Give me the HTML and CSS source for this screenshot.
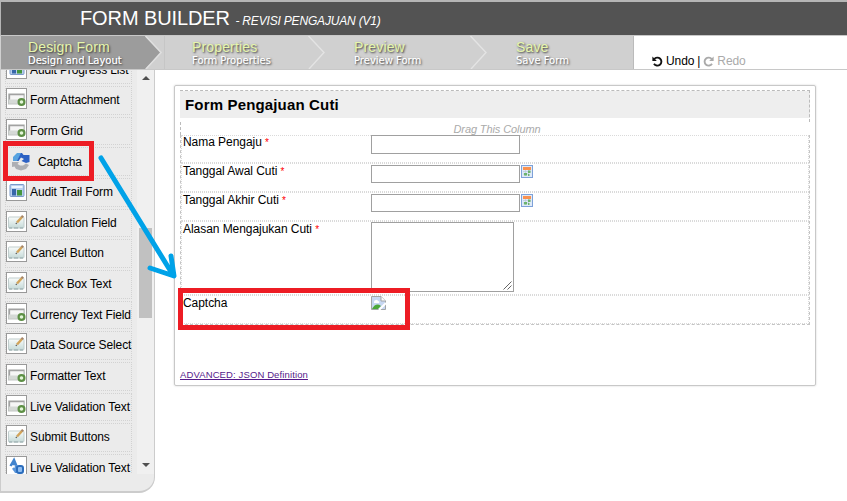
FILE: index.html
```html
<!DOCTYPE html>
<html lang="id">
<head>
<meta charset="utf-8">
<title>Form Builder</title>
<link rel="stylesheet" href="styles.css">
</head>
<body>
<svg class="defs" aria-hidden="true">
  <defs>
    <linearGradient id="soft" x1="0" y1="0" x2="0" y2="1"><stop offset="0" stop-color="#fafcfb"/><stop offset="1" stop-color="#c5dad8"/></linearGradient>
    <symbol id="field" viewBox="0 0 19 19">
      <rect x="1.5" y="5" width="16" height="10" fill="#d5d9d6" stroke="#c2c6c4"/>
      <rect x="3" y="6" width="13" height="4.500" fill="#f6f6f6"/><path d="M2.500 10.500V5.500H17" fill="none" stroke="#a2a2a2" stroke-width="1.300"/>
      <circle cx="14.500" cy="13" r="4" fill="#5d8f45"/><circle cx="14.500" cy="13" r="1.800" fill="#e4f5da"/>
    </symbol>
    <symbol id="pen" viewBox="0 0 19 19">
      <rect x="1.500" y="5" width="15.500" height="11" rx="1" fill="url(#soft)" stroke="#c0cdcd"/>
      <path d="M2 16h3M7 16h4M13 16h3" stroke="#92a7a8"/>
      <path d="M10 10.500L15 5" stroke="#d2a45a" stroke-width="2.500"/><path d="M14.800 5.200l1.200-1.400" stroke="#a58468" stroke-width="2.500"/>
      <path d="M8.800 11.800l1-1" stroke="#555" stroke-width="1.200"/>
    </symbol>
    <symbol id="audit" viewBox="0 0 19 19">
      <rect x="3" y="3.500" width="14" height="12" rx="1" fill="#b9d0ee" stroke="#7b9acb"/>
      <rect x="4.500" y="5" width="11" height="2" fill="#eef6ff"/><rect x="5" y="8" width="4" height="6.500" fill="#3767a9"/><rect x="10" y="9" width="5" height="5.500" fill="#45963f"/>
    </symbol>
    <symbol id="letters" viewBox="0 0 19 19">
      <path d="M3.5 9L7 3l2.500 6M5 7h4" fill="none" stroke="#4183cd" stroke-width="2.400"/>
      <path d="M6 11l3 4M9 8v8M12 9v7" stroke="#5a95d9" stroke-width="2.500"/><rect x="10" y="9" width="6" height="7" rx="2" fill="#8ebcf0" stroke="#2b6dbd" stroke-width="2"/>
    </symbol>
    <symbol id="calendar" viewBox="0 0 12 13">
      <rect x=".5" y=".5" width="11" height="12" fill="#dfeaf8" stroke="#7ea1d8"/>
      <rect x="2" y="2" width="8" height="3" fill="#f9914f"/><path d="M2 6.500h8M2 9h5M4.500 5v6M7.500 5v6" stroke="#b9c9dc" stroke-width=".7"/>
      <path d="M7 5.500h2.500v2.500H7zM3 8h3v2.500H3zM7 9h1.500v2H7z" fill="#6cb36c"/>
    </symbol>
  </defs>
</svg>

<header class="titlebar"><h1>FORM BUILDER <em>- REVISI PENGAJUAN (V1)</em></h1></header>

<nav class="nav">
  <ol class="steps">
    <li class="step step-design"><b>Design Form</b><span>Design and Layout</span></li>
    <li class="step step-props"><b>Properties</b><span>Form Properties</span></li>
    <li class="step step-preview"><b>Preview</b><span>Preview Form</span></li>
    <li class="step step-save"><b>Save</b><span>Save Form</span></li>
    <svg class="chevrons" viewBox="0 0 633 33">
      <path d="M1 0H145L161 16.500L145 33H1Z" fill="#9c9c9c"/>
      <path d="M145.500 0L161 16.500L146 33" fill="none" stroke="#e0e0e0" stroke-width="1.500"/>
      <path d="M164.500 0V33" stroke="#c6c6c6"/>
      <path d="M308.500 0L324 16.500L309 33M470.500 0L486 16.500L471 33" fill="none" stroke="#e4e4e4" stroke-width="1.400"/>
    </svg>
  </ol>
  <div class="history">
    <svg class="hicon" viewBox="0 0 11 11"><path d="M2.200 3.200A4 4 0 1 1 2 7.700" fill="none" stroke="#111" stroke-width="1.900"/><path d="M.4.600V5H4.800Z" fill="#111"/></svg>
    <span>Undo</span><i>|</i>
    <svg class="hicon" viewBox="0 0 11 11"><path d="M8.800 3.200A4 4 0 1 0 9 7.700" fill="none" stroke="#aaa" stroke-width="1.900"/><path d="M10.600.600V5H6.200Z" fill="#aaa"/></svg>
    <span class="off">Redo</span>
  </div>
</nav>

<div class="body">
  <aside class="palette">
    <div class="scroller">
      <ul class="items">
        <li><svg><use href="#audit"/></svg>Audit Progress List</li>
        <li><svg><use href="#field"/></svg>Form Attachment</li>
        <li><svg><use href="#field"/></svg>Form Grid</li>
        <li class="captcha"><svg viewBox="0 0 19 19"><path d="M2.500 9V5L6 1H10L11.500 3H17.500V10L14 11L9.500 9L12 7L9 5.500L6.500 9Z" fill="#2d62c4"/><path d="M1 9V5L5 1H9L7 5L5 9Z" fill="#58a3e0"/><path d="M0 10H7L5.500 12L8 13.500H11L14 11.500L17 13L14 17L9 18.500L4 17L2.500 14.500L0 15Z" fill="#adafb4"/></svg>Captcha</li>
        <li><svg><use href="#audit"/></svg>Audit Trail Form</li>
        <li><svg><use href="#pen"/></svg>Calculation Field</li>
        <li><svg><use href="#pen"/></svg>Cancel Button</li>
        <li><svg><use href="#pen"/></svg>Check Box Text</li>
        <li><svg><use href="#field"/></svg>Currency Text Field</li>
        <li><svg><use href="#pen"/></svg>Data Source Select</li>
        <li><svg><use href="#field"/></svg>Formatter Text</li>
        <li><svg><use href="#field"/></svg>Live Validation Text</li>
        <li><svg><use href="#pen"/></svg>Submit Buttons</li>
        <li><svg><use href="#letters"/></svg>Live Validation Text</li>
      </ul>
      <div class="scrollbar"><i class="up"></i><i class="thumb"></i><i class="down"></i></div>
    </div>
  </aside>

  <main class="canvas">
    <h2 class="section-title">Form Pengajuan Cuti</h2>
    <div class="drag">Drag This Column</div>
    <div class="column">
      <div class="row first"><label>Nama Pengaju <b>*</b></label><div class="box"></div></div>
      <div class="row"><label>Tanggal Awal Cuti <b>*</b></label><div class="box"></div><svg class="cal"><use href="#calendar"/></svg></div>
      <div class="row"><label>Tanggal Akhir Cuti <b>*</b></label><div class="box"></div><svg class="cal"><use href="#calendar"/></svg></div>
      <div class="row tall"><label>Alasan Mengajukan Cuti <b>*</b></label><div class="box area"><svg viewBox="0 0 9 9"><path d="M.5 8.500L8.500 .5M4.500 8.500L8.500 4.500" stroke="#555" stroke-width=".9"/></svg></div></div>
      <div class="row last"><label>Captcha</label><svg class="broken" viewBox="0 0 15 14"><path d="M.5.5H10L14.500 5V13.500H.5Z" fill="#c7d7f2" stroke="#a2a5a5"/><path d="M10 .5V5h4.500" fill="#fff" stroke="#a2a5a5"/><path d="M3 6q0-2 2-2 1-1 2 1 2 0 1 2H3z" fill="#fff"/><path d="M1 13q4-7 9-3l-3 3z" fill="#4ca83a"/><path d="M8 14L15 7" stroke="#fff" stroke-width="2"/></svg></div>
    </div>
    <a class="json">ADVANCED: JSON Definition</a>
  </main>
</div>

<div class="mark mark-source"></div>
<div class="mark mark-target"></div>
<svg class="pointer" viewBox="0 0 100 140"><path d="M11 14L83 131M60 124L84 132L81 112" fill="none" stroke="#00a2e8" stroke-width="5" stroke-linecap="round" stroke-linejoin="round"/></svg>
</body>
</html>
```
FILE: styles.css
```css
* { box-sizing: border-box; }
body { margin: 0; width: 847px; height: 501px; overflow: hidden; background: #fff; color: #000; font: 12px/15px "Liberation Sans", Arial, sans-serif; }
.defs { position: absolute; width: 0; height: 0; }
svg { display: block; flex: none; }

.titlebar { height: 36px; background: #535353; border-top: 2px solid #b5b5b5; border-left: 1px solid #b5b5b5; border-bottom: 1px solid #c8c8c8; padding-left: 79px; }
.titlebar h1 { margin: 0; color: #fff; font-size: 20px; font-weight: 400; line-height: 32px; letter-spacing: -.1px; white-space: nowrap; }
.titlebar em { font-size: 12px; letter-spacing: -.18px; }

.nav { display: flex; height: 34px; border-bottom: 1px solid #c8c8c8; }
.steps { position: relative; display: flex; width: 634px; margin: 0; padding: 0; list-style: none; background: #d0d0d0; border-right: 1px solid #bbb; }
.chevrons { position: absolute; left: 0; top: 0; width: 633px; height: 33px; }
.step { position: relative; z-index: 1; display: flex; flex-direction: column; padding-top: 3px; color: #fff; white-space: nowrap; }
.step-design { width: 164px; padding-left: 28px; }
.step-props { width: 162px; padding-left: 28px; }
.step-preview { width: 162px; padding-left: 28px; }
.step-save { padding-left: 28px; }
.step b { font-size: 14px; line-height: 16px; font-weight: 400; letter-spacing: .15px; color: #e6f6ac; text-shadow: 1px 1px 2px #333; }
.step span { font: 10px/12px "DejaVu Sans", sans-serif; text-shadow: 1px 1px 2px #333, 0 0 .5px #fff; }
.history { display: flex; align-items: center; padding: 17px 0 0 18px; gap: 3px; letter-spacing: -.1px; }
.history i { font-style: normal; }
.hicon { width: 11px; height: 11px; }
.off { color: #aaa; }

.body { display: flex; }
.palette { width: 155px; height: 423px; background: #ebebeb; border: solid #ccc; border-width: 0 1px 1px; border-bottom-width: 2px; border-radius: 0 0 16px 0; }
.scroller { display: flex; height: 404px; overflow: hidden; }
.items { width: 136px; height: 450px; margin: -14.5px 0 0; padding: 0 5px 0 4px; list-style: none; letter-spacing: -.12px; }
.items li { display: flex; height: 28.67px; margin-bottom: 2px; padding: 1px 0 0; gap: 3px; border: 1px dotted #d2d2d2; line-height: 25.6px; white-space: nowrap; }
.items li svg { width: 21px; height: 21px; background: #fff; border: 1px solid #999; }
.items li.captcha { padding-left: 6px; gap: 7px; line-height: 26px; }
.items li.captcha svg { width: 19px; height: 19px; margin-top: 3px; background: none; border: 0; }
.scrollbar { display: flex; flex-direction: column; align-items: center; width: 17px; padding: 6px 0; background: #f0f0f0; }
.up, .down { border: 4px solid transparent; }
.up { border-top: 0; border-bottom: 4px solid #505050; }
.thumb { width: 13px; height: 90px; margin-top: 148px; background: #c1c1c1; }
.down { margin-top: 145px; border-bottom: 0; border-top: 4px solid #505050; }

.canvas { width: 642px; height: 301px; margin: 15px 0 0 19px; padding: 4px 5px; border: 1px solid #c8c8c8; border-radius: 2px; box-shadow: 0 0 2px #ccc; }
.section-title { height: 32px; margin: 0; padding-left: 5px; border: 1px dashed #bbb; border-width: 1px 1px 0 0; background: linear-gradient(#eee 27px, #fff 27px); font-size: 15px; line-height: 28px; letter-spacing: .16px; }
.drag { height: 13px; padding: 1px 0 0 3px; border-left: 1px dashed #bbb; color: #aaa; font-size: 11px; line-height: 13px; font-style: italic; text-align: center; letter-spacing: -.1px; }
.column { border: 1px dashed #c4c4c4; border-top: 0; height: 190px; }
.row { display: flex; height: 29px; padding: 1px 0 0 1px; border: 1px dotted #dadada; }
.row.first { height: 28px; padding-top: 0; }
.row label { width: 188px; line-height: 13px; letter-spacing: -.05px; }
.row label b { color: #f00; font-size: 10px; font-weight: 400; }
.box { width: 149px; height: 18px; border: 1px solid #a0a0a0; background: #fff; }
.first .box { height: 19px; margin-top: -1px; }
.row.tall { height: 74px; padding-top: 0; }
.row.tall label { padding-top: 1px; }
.box.area { display: flex; align-items: flex-end; justify-content: flex-end; width: 143px; height: 70px; padding: 1px; }
.area svg { width: 9px; height: 9px; }
.cal { width: 12px; height: 13px; margin-left: 1px; }
.broken { width: 15px; height: 14px; }
.row.last { height: 29px; padding-top: 0; }
.row.last label { padding-top: 1px; }
.json { display: block; margin-top: 44px; font-size: 9.500px; line-height: 12px; letter-spacing: .12px; color: #551a8b; text-decoration: underline; }

.mark { position: absolute; border: 5px solid #ed1c24; }
.mark-source { left: 3px; top: 141px; width: 91px; height: 40px; }
.mark-target { left: 178px; top: 288px; width: 232px; height: 42px; }
.pointer { position: absolute; left: 90px; top: 144px; width: 100px; height: 140px; }
```
